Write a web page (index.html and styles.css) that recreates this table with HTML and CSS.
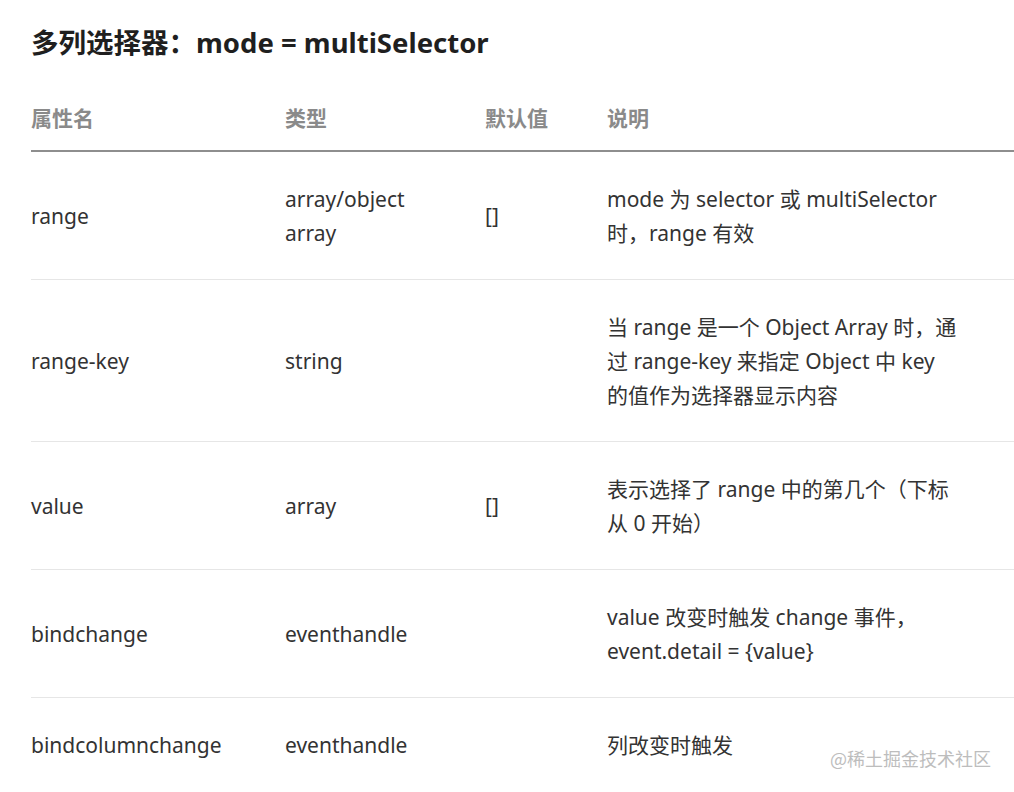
FILE: index.html
```html
<!DOCTYPE html>
<html lang="zh-CN">
<head>
<meta charset="utf-8">
<title>多列选择器</title>
<link rel="stylesheet" href="styles.css">
</head>
<body>
<div class="page">
  <h2 class="title">多列选择器：mode = multiSelector</h2>
  <table class="props">
    <colgroup>
      <col class="c-name">
      <col class="c-type">
      <col class="c-def">
      <col class="c-desc">
    </colgroup>
    <thead>
      <tr><th>属性名</th><th>类型</th><th>默认值</th><th>说明</th></tr>
    </thead>
    <tbody>
      <tr>
        <td>range</td>
        <td>array/object<br>array</td>
        <td>[]</td>
        <td>mode 为 selector 或 multiSelector<br>时，range 有效</td>
      </tr>
      <tr>
        <td>range-key</td>
        <td>string</td>
        <td></td>
        <td>当 range 是一个 Object Array 时，通<br>过 range-key 来指定 Object 中 key<br>的值作为选择器显示内容</td>
      </tr>
      <tr>
        <td>value</td>
        <td>array</td>
        <td>[]</td>
        <td>表示选择了 range 中的第几个（下标<br>从 0 开始）</td>
      </tr>
      <tr>
        <td>bindchange</td>
        <td>eventhandle</td>
        <td></td>
        <td>value 改变时触发 change 事件，<br>event.detail = {value}</td>
      </tr>
      <tr>
        <td>bindcolumnchange</td>
        <td>eventhandle</td>
        <td></td>
        <td>列改变时触发</td>
      </tr>
    </tbody>
  </table>
  <div class="watermark">@稀土掘金技术社区</div>
</div>
</body>
</html>
```

FILE: styles.css
```css
html, body {
  margin: 0;
  padding: 0;
  background: #ffffff;
}

body {
  font-family: "Noto Sans", "Noto Sans CJK SC", sans-serif;
  color: #333333;
  overflow: hidden;
}

.page {
  position: relative;
  height: 792px;
  padding: 23px 0 0 31px;
  box-sizing: border-box;
}

.title {
  margin: 0;
  font-size: 27.5px;
  line-height: 40px;
  font-weight: 700;
  color: #1f1f1f;
}

.props {
  margin-top: 22px;
  width: 983px;
  border-collapse: collapse;
  table-layout: fixed;
  font-size: 21px;
  line-height: 34px;
}

.c-name { width: 254px; }
.c-type { width: 200px; }
.c-def { width: 122px; }
.c-desc { width: auto; }

.props th {
  text-align: left;
  font-weight: 700;
  color: #8a8a8a;
  padding: 15.5px 0 15.5px 0;
  border-bottom: 2px solid #8e8e8e;
}

.props td {
  padding: 29.5px 0;
  vertical-align: middle;
  border-bottom: 1px solid #e6e6e6;
  color: #333333;
}

.props tbody tr:last-child td {
  border-bottom: none;
}

.watermark {
  position: absolute;
  right: 23px;
  top: 746px;
  font-size: 18px;
  line-height: 24px;
  color: #bdbdbd;
  font-family: "Noto Sans CJK SC", sans-serif;
  text-shadow: 0 0 1px #ffffff;
}
```
